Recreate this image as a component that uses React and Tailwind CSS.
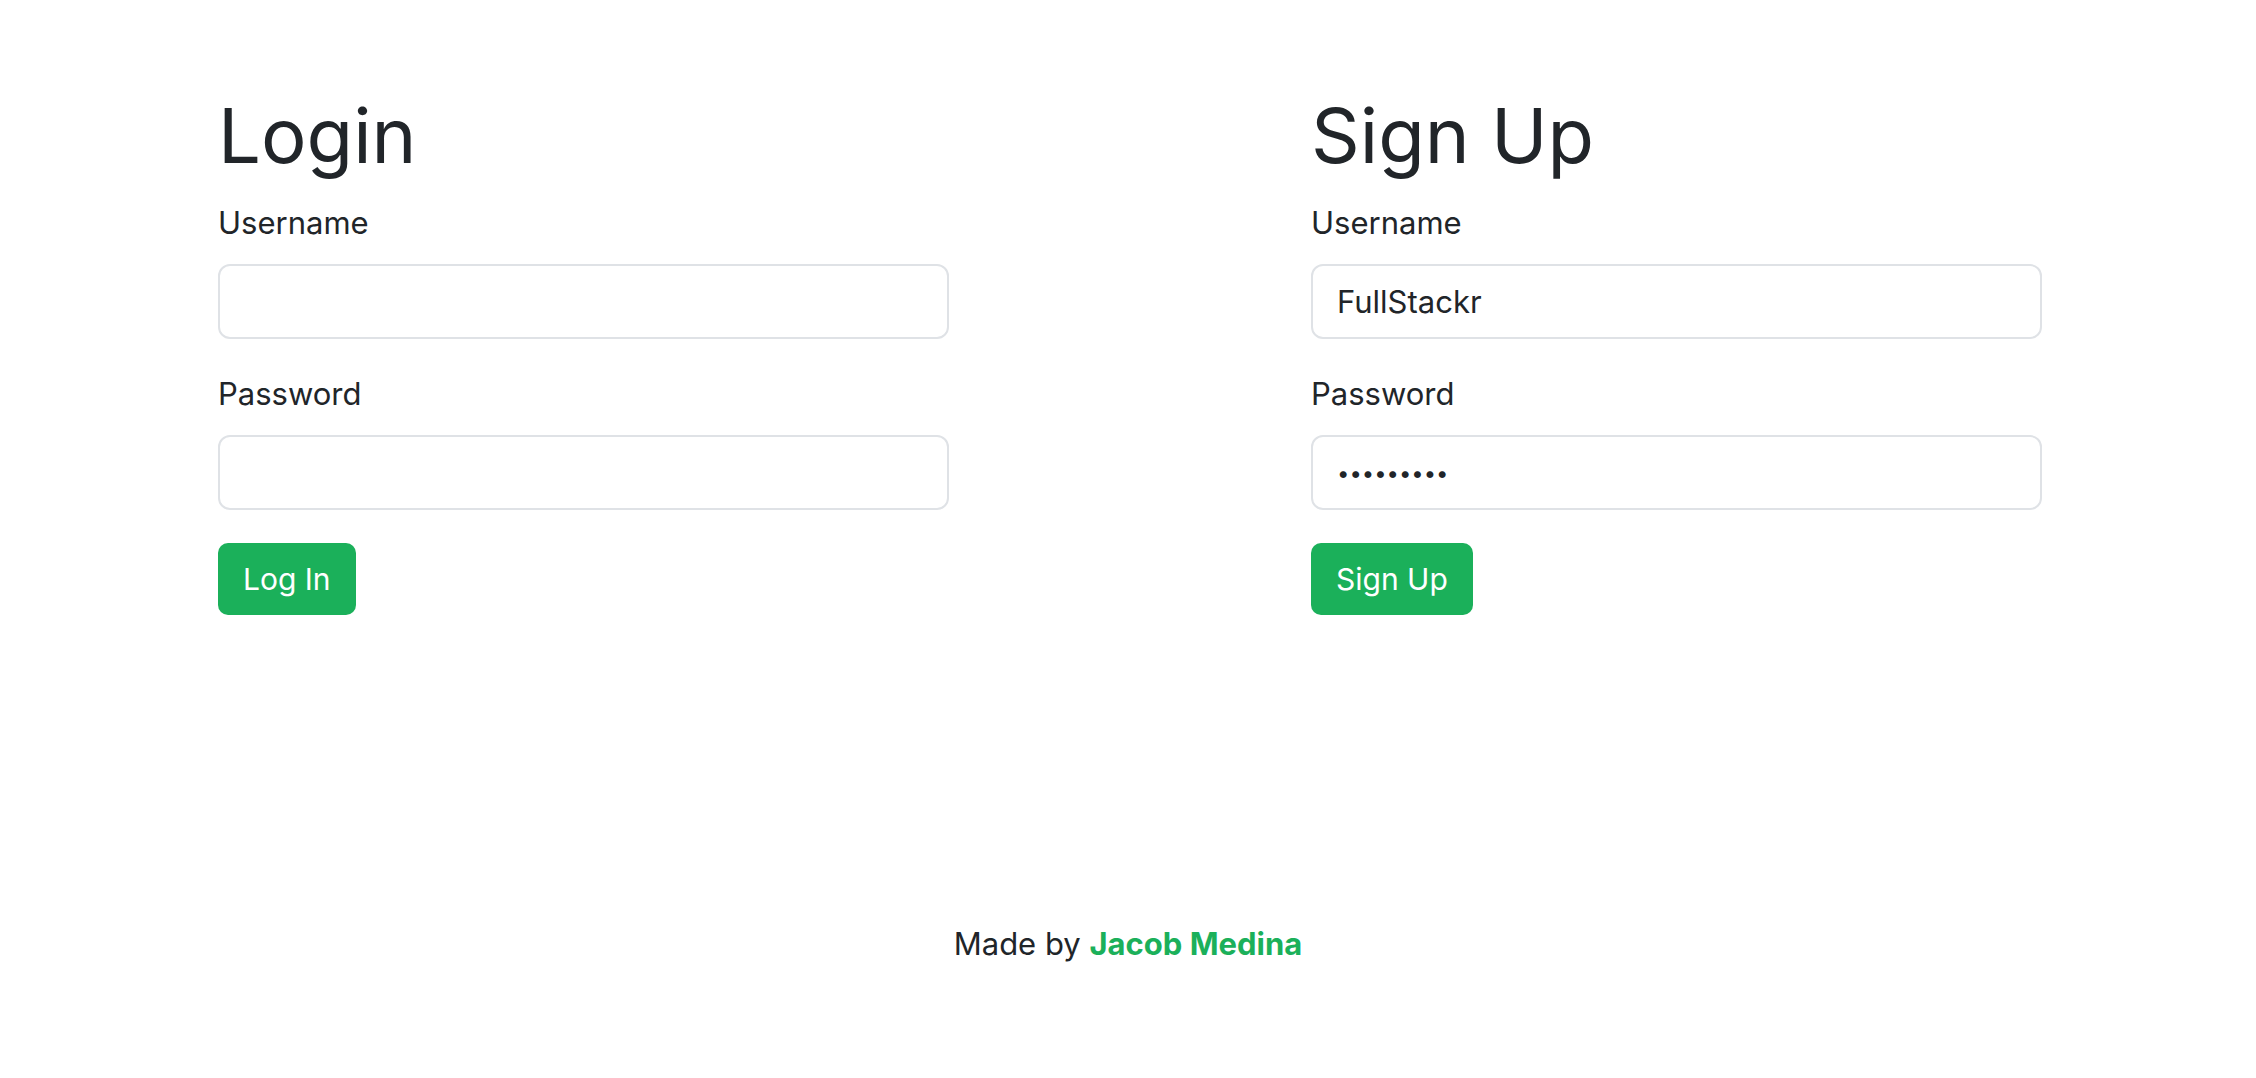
import React from "react";

function Field({ label, type = "text", value = "" }) {
  const isPw = type === "password";
  return (
    <div className="flex flex-col">
      <label className="text-[31px] leading-[45px] mb-[19px] text-[#212529]">{label}</label>
      <input
        type={type}
        defaultValue={value}
        className={
          isPw
            ? "h-[75px] w-full rounded-[12px] border-2 border-[#dfe2e6] bg-white px-[24px] text-[22px] text-[#212529] outline-none"
            : "h-[75px] w-full rounded-[12px] border-2 border-[#dfe2e6] bg-white px-[24px] text-[31px] text-[#212529] outline-none"
        }
        style={{ fontFamily: "Inter, 'Noto Sans', sans-serif" }}
      />
    </div>
  );
}

function FormCol({ title, button, user = "", pass = "", first = false }) {
  return (
    <div className={first ? "w-[1093px] shrink-0" : "w-[731px] shrink-0"}>
      <div className="w-[731px] flex flex-col">
        <h1 className="text-[76px] leading-[89px] font-normal text-[#212529] mb-[20px]">{title}</h1>
        <Field label="Username" value={user} />
        <div className="h-[32px]" />
        <Field label="Password" type="password" value={pass} />
        <div className="mt-[33px]">
          <button className="h-[72px] rounded-[10px] bg-[#1bb05a] px-[25px] text-[30px] text-white">
            {button}
          </button>
        </div>
      </div>
    </div>
  );
}

export default function App() {
  return (
    <div
      className="min-h-screen w-full overflow-hidden bg-white text-[#212529]"
      style={{ fontFamily: "Inter, 'Noto Sans', sans-serif" }}
    >
      <div className="flex pl-[218px] pt-[91px]">
        <FormCol title="Login" button="Log In" first />
        <FormCol title="Sign Up" button="Sign Up" user="FullStackr" pass="123456789" />
      </div>
      <div className="mt-[306px] text-center text-[31px] leading-[45px]">
        Made by <span className="font-bold text-[#1bb05a]">Jacob Medina</span>
      </div>
    </div>
  );
}
